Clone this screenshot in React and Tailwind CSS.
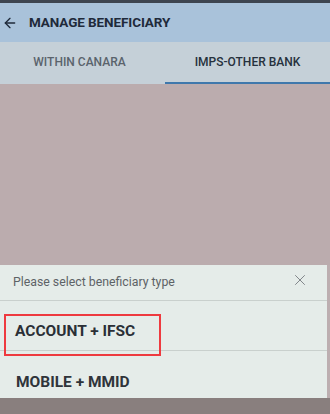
import { ArrowLeft, X } from "lucide-react";

export default function App() {
  return (
    <main
      className="w-[330px] h-[414px] flex flex-col overflow-hidden bg-[#bcaeb0]"
      style={{ fontFamily: "Roboto, 'Noto Sans', sans-serif" }}
    >
      {/* top strip */}
      <div className="h-[3px] bg-[#3d4550]" />

      {/* header */}
      <header className="h-[39px] flex items-center bg-[#a9c2da] text-[#1f2a3a]">
        <ArrowLeft className="ml-[2px] w-[16px] h-[16px]" strokeWidth={2} />
        <h1 className="ml-[11px] text-[13.5px] font-bold tracking-[-0.1px]">
          MANAGE BENEFICIARY
        </h1>
      </header>

      {/* tabs */}
      <nav className="h-[42px] grid grid-cols-2 bg-[#c5d0d8] text-[12px] font-medium">
        <div className="flex items-center justify-center pr-[6px] text-[#5a636c] border-b-2 border-transparent">
          WITHIN CANARA
        </div>
        <div className="flex items-center justify-center text-[#26313d] border-b-2 border-[#3f78ac]">
          IMPS-OTHER BANK
        </div>
      </nav>

      {/* body */}
      <div className="flex-1 bg-[#bbacae]" />

      {/* bottom sheet */}
      <section className="mr-[3px] bg-[#e5ece9] text-[#2c3138]">
        <div className="h-[36px] flex items-center justify-between pl-[13px] pr-[18px] border-b border-[#c9d0cd]">
          <span className="text-[12.3px] text-[#5d6266]">Please select beneficiary type</span>
          <X className="w-[18px] h-[18px] text-[#767b7f] -mt-[5px]" strokeWidth={1.2} />
        </div>
        <div className="relative h-[50px] pt-[21px] pl-[15px] border-b border-[#c9d0cd]">
          <span className="block leading-[18px] text-[15.5px] font-bold text-[#2a2f36]">ACCOUNT + IFSC</span>
          <div className="absolute left-[4px] top-[13px] w-[157px] h-[42px] border-2 border-[#ee3a3f]" />
        </div>
        <div className="h-[47px] pt-[22px] pl-[16px]">
          <span className="block leading-[18px] text-[15.5px] font-bold text-[#2f343a]">MOBILE + MMID</span>
        </div>
      </section>

      {/* below sheet */}
      <div className="h-[16px] bg-[#897f7e]" />
    </main>
  );
}
